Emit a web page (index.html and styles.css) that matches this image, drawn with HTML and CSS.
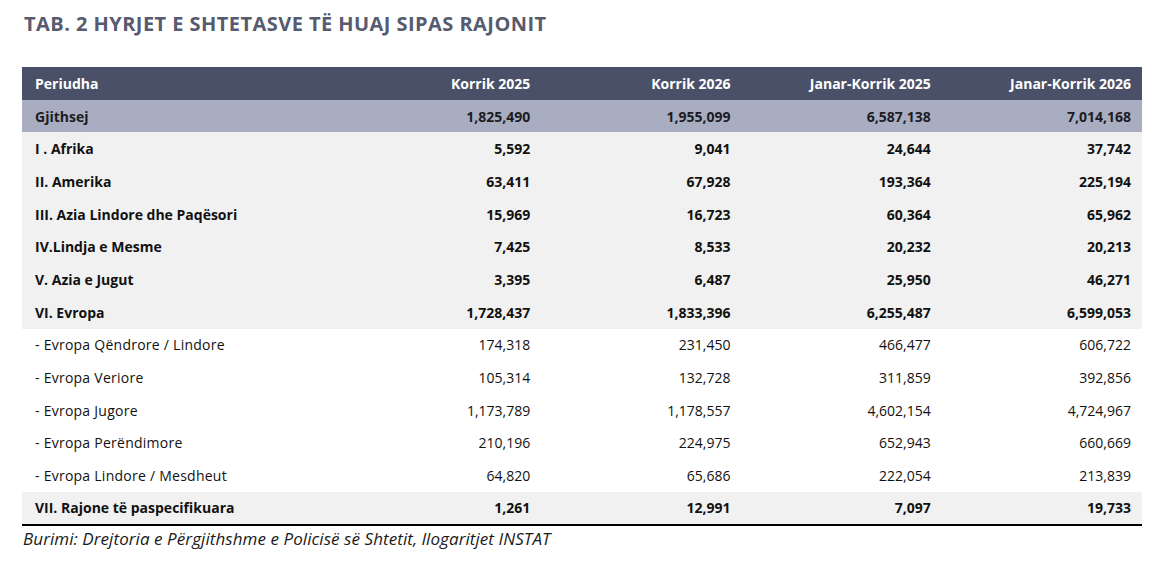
FILE: index.html
```html
<!DOCTYPE html>
<html lang="sq">
<head>
<meta charset="utf-8">
<title>TAB. 2 Hyrjet e shtetasve të huaj sipas rajonit</title>
<link rel="stylesheet" href="styles.css">
</head>
<body>
<div class="page">
  <h1 class="title">TAB. 2 HYRJET E SHTETASVE TË HUAJ SIPAS RAJONIT</h1>
  <table class="data">
    <colgroup>
      <col class="c-label"><col class="c-num"><col class="c-num"><col class="c-num"><col class="c-num">
    </colgroup>
    <thead>
      <tr class="head"><th>Periudha</th><th>Korrik 2025</th><th>Korrik 2026</th><th>Janar-Korrik 2025</th><th>Janar-Korrik 2026</th></tr>
    </thead>
    <tbody>
      <tr class="total"><td>Gjithsej</td><td>1,825,490</td><td>1,955,099</td><td>6,587,138</td><td>7,014,168</td></tr>
      <tr class="region"><td>I . Afrika</td><td>5,592</td><td>9,041</td><td>24,644</td><td>37,742</td></tr>
      <tr class="region"><td>II. Amerika</td><td>63,411</td><td>67,928</td><td>193,364</td><td>225,194</td></tr>
      <tr class="region"><td>III. Azia Lindore dhe Paqësori</td><td>15,969</td><td>16,723</td><td>60,364</td><td>65,962</td></tr>
      <tr class="region"><td>IV.Lindja e Mesme</td><td>7,425</td><td>8,533</td><td>20,232</td><td>20,213</td></tr>
      <tr class="region"><td>V. Azia e Jugut</td><td>3,395</td><td>6,487</td><td>25,950</td><td>46,271</td></tr>
      <tr class="region"><td>VI. Evropa</td><td>1,728,437</td><td>1,833,396</td><td>6,255,487</td><td>6,599,053</td></tr>
      <tr class="sub"><td>- Evropa Qëndrore / Lindore</td><td>174,318</td><td>231,450</td><td>466,477</td><td>606,722</td></tr>
      <tr class="sub"><td>- Evropa Veriore</td><td>105,314</td><td>132,728</td><td>311,859</td><td>392,856</td></tr>
      <tr class="sub"><td>- Evropa Jugore</td><td>1,173,789</td><td>1,178,557</td><td>4,602,154</td><td>4,724,967</td></tr>
      <tr class="sub"><td>- Evropa Perëndimore</td><td>210,196</td><td>224,975</td><td>652,943</td><td>660,669</td></tr>
      <tr class="sub"><td>- Evropa Lindore / Mesdheut</td><td>64,820</td><td>65,686</td><td>222,054</td><td>213,839</td></tr>
      <tr class="region last"><td>VII. Rajone të paspecifikuara</td><td>1,261</td><td>12,991</td><td>7,097</td><td>19,733</td></tr>
    </tbody>
  </table>
  <p class="source">Burimi: Drejtoria e Përgjithshme e Policisë së Shtetit, llogaritjet INSTAT</p>
</div>
</body>
</html>
```
FILE: styles.css
```css
html, body {
  margin: 0;
  padding: 0;
  background: #ffffff;
}

.page {
  padding: 11px 17px 0 22px;
  font-family: "Open Sans", "Noto Sans", sans-serif;
  color: #111111;
}

.title {
  margin: 0 0 31px 2px;
  font-size: 20px;
  line-height: 25px;
  font-weight: 700;
  color: #565b70;
  letter-spacing: 0.45px;
}

.data {
  width: 1120px;
  border-collapse: collapse;
  border-bottom: 2px solid #000000;
  font-size: 14px;
}

.c-label { width: 319px; }
.c-num { width: 200.25px; }

.data th,
.data td {
  height: 32.7px;
  padding: 0 11px 0 12px;
  box-sizing: border-box;
  text-align: right;
  vertical-align: middle;
  white-space: nowrap;
}

.data th:first-child,
.data td:first-child {
  text-align: left;
  padding-left: 13px;
}

.head th {
  background: #495068;
  color: #ffffff;
  font-weight: 700;
}

.total td {
  background: #a9adc1;
  color: #1c1c24;
  font-weight: 700;
}

.region td {
  background: #f1f1f1;
  font-weight: 700;
}

.sub td {
  background: #ffffff;
  font-weight: 400;
}

.sub td:first-child {
  letter-spacing: 0.25px;
}

.source {
  margin: 3px 0 0 1px;
  font-size: 17px;
  line-height: 20px;
  font-style: italic;
  color: #1a1a1a;
  letter-spacing: 0.07px;
}
```
